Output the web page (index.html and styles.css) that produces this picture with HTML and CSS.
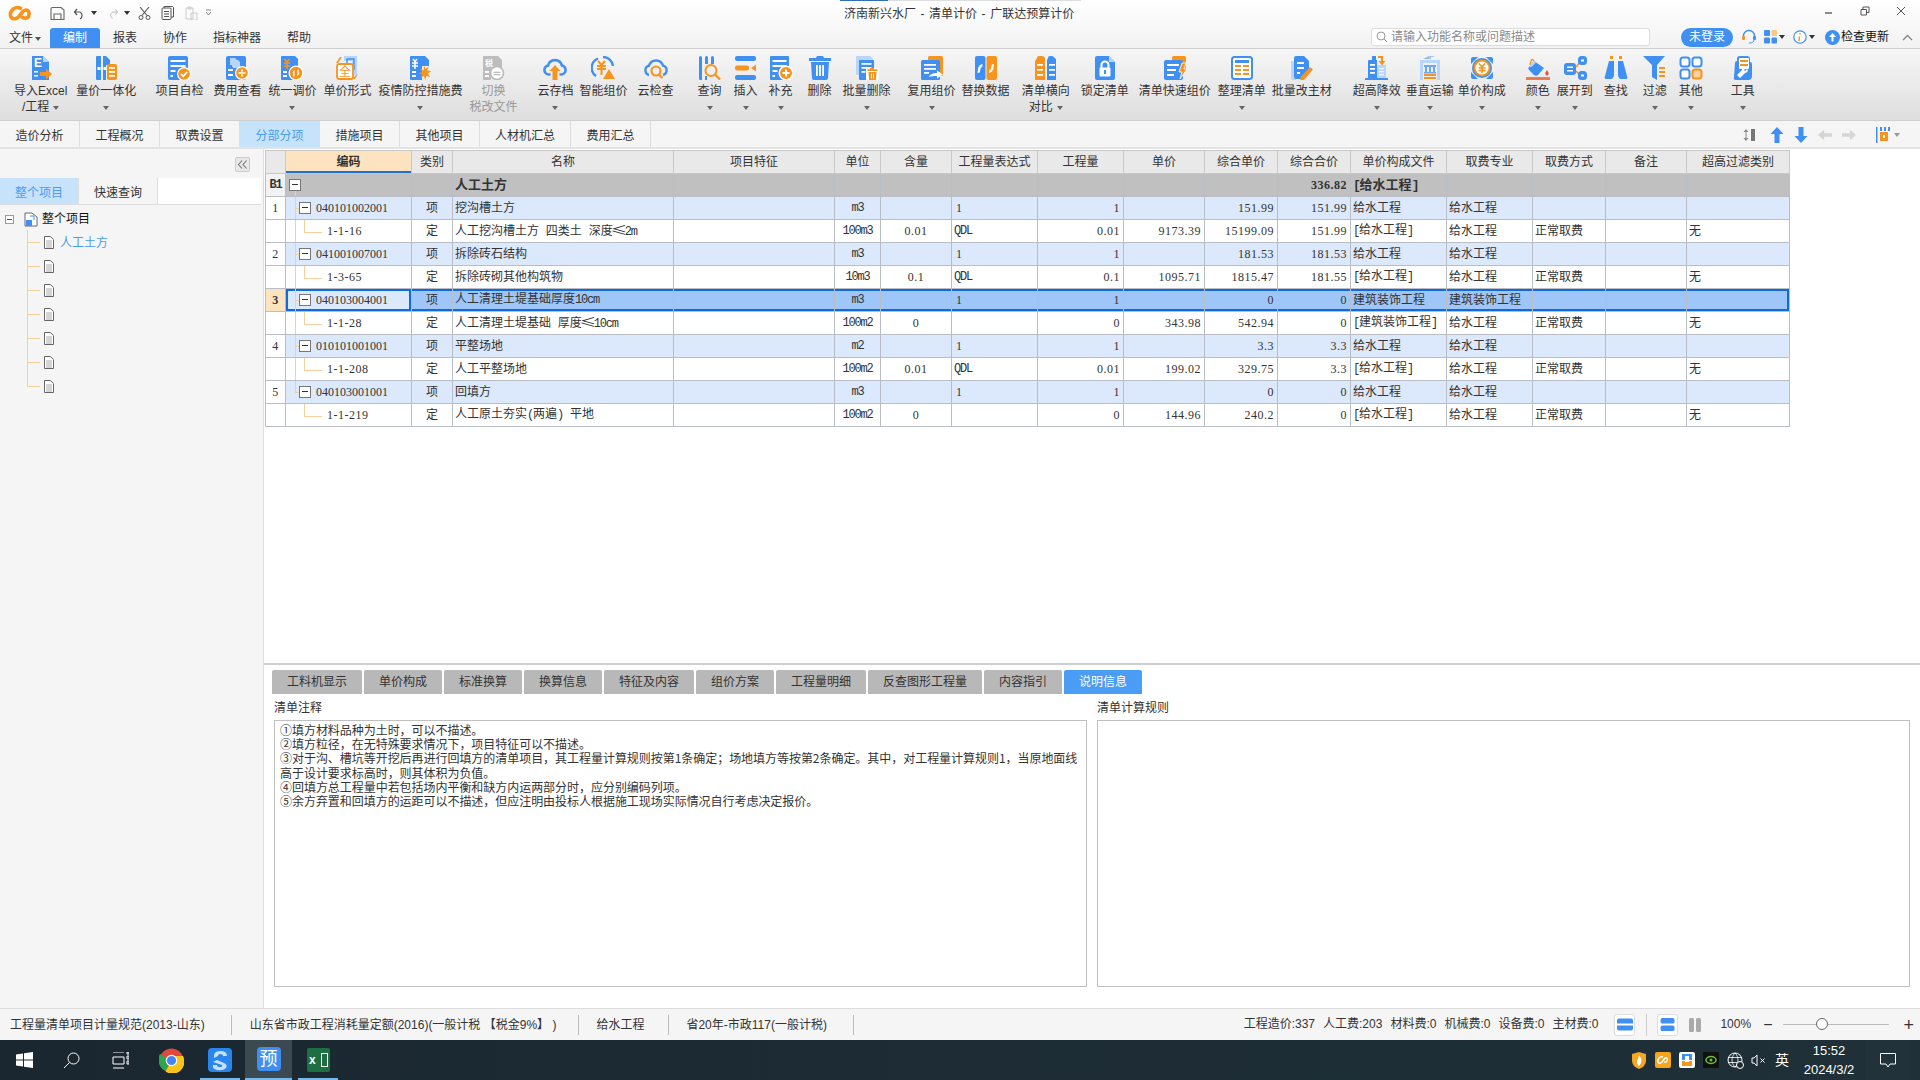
FILE: index.html
```html
<!DOCTYPE html>
<html lang="zh-CN">
<head>
<meta charset="utf-8">
<title>济南新兴水厂 - 清单计价 - 广联达预算计价</title>
<link rel="stylesheet" href="styles.css">
</head>
<body>
<svg class="defs" aria-hidden="true">
  <symbol id="i-doc" viewBox="0 0 10 13"><path d="M.5.5h6l3 3v9h-9z" fill="#fff" stroke="#666"/><path d="M2 5h6M2 7h6M2 9h6M2 11h6" stroke="#888" stroke-width=".7"/></symbol>
  <symbol id="i-excel" viewBox="0 0 24 24"><path class="b" d="M3 0h11l6 6v18H3z"/><path class="lb" d="M14 0l6 6h-6z"/><text class="gt" x="5" y="11" font-size="12" font-weight="700" fill="#fff">E</text><path class="w" d="M5 15h4v1.5H5zM5 19h4v1.5H5z"/><path class="o" d="M11 16h6v-3.500l6 5.500-6 5.500V20h-6z"/></symbol>
  <symbol id="i-liang" viewBox="0 0 24 24"><path class="b" d="M2 1q0-1 1-1h4v24H3q-1 0-1-1zM9 0h3l4 4v5h-4v15H9z"/><path class="w" d="M3.500 11h3v3h-3zM9.500 11h2.500v3H9.500z"/><rect class="o" x="13" y="8" width="10" height="16" rx="2"/><path class="w" d="M15 11h6v1.800h-6zM15 15h6v1.800h-6zM15 19h6v1.800h-6z"/></symbol>
  <symbol id="i-check" viewBox="0 0 24 24"><rect class="b" x="1" y="0" width="20" height="24" rx="2"/><path class="w" d="M3.500 4h15v2h-15zM3.500 9h15v2h-15zM3.500 14h5v2h-5zM3.500 19h2.500v2H3.500z"/><circle cx="17" cy="18" r="7" fill="#fff"/><circle class="o" cx="17" cy="18" r="5.800"/><path d="M14 18l2.300 2.300 3.800-4.300" fill="none" stroke="#fff" stroke-width="1.800"/></symbol>
  <symbol id="i-fee" viewBox="0 0 24 24"><rect class="b" x="1" y="0" width="20" height="24" rx="2"/><path class="lb" d="M5 2h5l2 2v7H7V9H5z"/><path class="lb" d="M8 4h5l2 2v6H8z"/><path class="w" d="M3 13h5v2H3zM3 18h5v2H3z"/><circle cx="17" cy="17" r="7" fill="#fff"/><circle class="o" cx="17" cy="17" r="5.800"/><path class="w" d="M13.500 16.300h7v1.400h-7zM16 13.500h2v2h-2zM16 18.500h2v2h-2z"/></symbol>
  <symbol id="i-tiao" viewBox="0 0 24 24"><path class="b" d="M1 1q0-1 1-1h13l3 3v21H2q-1 0-1-1z"/><path d="M4.500 3l2.500 3 2.500-3M3.800 7h6.400M3.800 10h6.400M7 6v7" fill="none" stroke="#f6941e" stroke-width="1.600"/><path class="w" d="M3 15h4v2H3zM3 19h4v2H3z"/><circle cx="16" cy="17" r="7.500" fill="#fff"/><circle class="o" cx="16" cy="17" r="6.200"/><path class="w" d="M12.500 17l2-3.500V20.500h-1.200v-3.500zM19.500 17l-2 3.500V13.500h1.200V17z"/></symbol>
  <symbol id="i-dan" viewBox="0 0 24 24"><path class="lb" d="M9 0h13v19h-5V5H9z"/><path d="M12 3h7v10h-7z" fill="none" stroke="#3f90f2" stroke-width="1.400"/><path class="o" d="M5 1h2L3 7H1zM20 20l3-2-3 5h-2z"/><rect x="2" y="8" width="16" height="15" rx="2" fill="#fff" stroke="#f6941e" stroke-width="1.800"/><text class="gt" x="4" y="20" font-size="12" fill="#f6941e">全</text></symbol>
  <symbol id="i-yi" viewBox="0 0 24 24"><path class="b" d="M2 1q0-1 1-1h14l4 4v6h-7v14H3q-1 0-1-1z"/><path d="M5 3l2 2.500L9 3M4 7h6M4 10h6M7 6v7" fill="none" stroke="#fff" stroke-width="1.500"/><path class="w" d="M4 15h4v2H4zM4 19h4v2H4z"/><path class="o" d="M16 9l1.300 4 3.500-2.500-1.500 4 4 .5-3.500 2.500 2.500 3.500-4-1-1 4-1.500-4-3.500 2 1.800-3.500-3.800-1 3.800-1.500-2-3.500 3.500 2z"/></symbol>
  <symbol id="i-qie" viewBox="0 0 24 24"><path class="g" d="M2 1q0-1 1-1h14l4 4v8H10v12H3q-1 0-1-1z"/><text class="gt" x="4" y="10" font-size="8" fill="#fff" font-weight="700">税</text><path class="w" d="M4 15h4v2H4zM4 19h4v2H4z"/><circle cx="16" cy="17" r="6.500" fill="#fff" stroke="#bbb" stroke-width="1.600"/><path class="g" d="M12.500 15.800h7v1.200h-7zM12.500 18h7v1.200h-7z"/></symbol>
  <symbol id="i-cup" viewBox="0 0 24 24"><path d="M6.500 18.500H6a4.500 4.500 0 0 1-1-8.900 7.200 7.200 0 0 1 14 0 4.500 4.500 0 0 1-1 8.900h-.5" fill="none" stroke="#3f90f2" stroke-width="2.600" stroke-linecap="round"/><path class="o" d="M12 9l5.500 6H14.500v9h-5v-9H6.500z"/></symbol>
  <symbol id="i-zhi" viewBox="0 0 24 24"><path d="M7 2.500a10 10 0 0 0-2 17.500M12 1a10 10 0 0 1 10 9" fill="none" stroke="#3f90f2" stroke-width="2.400"/><path d="M7 5l3.500 4L14 5M6 10h9M6 13h9M10.500 9v10" fill="none" stroke="#f6941e" stroke-width="2"/><path class="o" d="M18 13l6 10H12z"/></symbol>
  <symbol id="i-cck" viewBox="0 0 24 24"><path d="M5 19a4.800 4.800 0 0 1 0-9.300 7.300 7.300 0 0 1 14 0 4.800 4.800 0 0 1 0 9.300" fill="none" stroke="#3f90f2" stroke-width="2.400"/><circle cx="12" cy="15" r="4.500" fill="none" stroke="#f6941e" stroke-width="2.200"/><path d="M15 18.500l3.500 3.500" stroke="#f6941e" stroke-width="2.400"/></symbol>
  <symbol id="i-cha" viewBox="0 0 24 24"><path class="b" d="M1 1.500a1.500 1.500 0 0 1 3 0V24H2.500A1.500 1.500 0 0 1 1 22.500zM7 1.500a1.500 1.500 0 0 1 3 0V8H7zM13 1.500a1.500 1.500 0 0 1 3 0V8h-3z"/><path class="b" d="M7 20h2v4H7z"/><circle cx="13" cy="14.500" r="5.500" fill="none" stroke="#f6941e" stroke-width="2"/><path d="M17 18.500l5 5" stroke="#f6941e" stroke-width="2.400"/></symbol>
  <symbol id="i-cru" viewBox="0 0 24 24"><rect class="b" x="1" y="0" width="21" height="5" rx="2"/><rect class="o" x="1" y="9.500" width="14" height="5" rx="2"/><path class="o" d="M22 8.500v7l-5-3.500z"/><rect class="b" x="1" y="19" width="21" height="5" rx="2"/></symbol>
  <symbol id="i-bu" viewBox="0 0 24 24"><path class="b" d="M1 1q0-1 1-1h17q1 0 1 1v23H2q-1 0-1-1z"/><path class="w" d="M3.500 4h14v2h-14zM3.500 9h14v2h-14zM3.500 14h5v2h-5zM3.500 19h2.500v2H3.500z"/><circle cx="17" cy="17" r="7.500" fill="#fff"/><circle class="o" cx="17" cy="17" r="6"/><path class="w" d="M16 13.500h2v2.500h2.500v2H18v2.500h-2V18h-2.500v-2H16z"/></symbol>
  <symbol id="i-del" viewBox="0 0 24 24"><path class="b" d="M9 0h6l1 2h7v3H1V2h7zM3 6h18l-1 16q0 2-2 2H6q-2 0-2-2z"/><path class="w" d="M8 9h1.800v11H8zM11.100 9h1.800v11h-1.800zM14.200 9H16v11h-1.800z"/></symbol>
  <symbol id="i-bdel" viewBox="0 0 24 24"><path class="lb" d="M1 1q0-1 1-1h13l3 3v16H2q-1 0-1-1z"/><path class="b" d="M4 4h15v20H5q-1 0-1-1z"/><path class="w" d="M6.500 7h10v1.800h-10zM6.500 11h10v1.800h-10zM6.500 15h4v1.800h-4z"/><rect x="11" y="12" width="13" height="12" fill="#fff" rx="1"/><path class="o" d="M15 12h4v1.200h3.500v1.800h-10v-1.800H15zM13.500 16h8l-.6 8h-6.800z"/><path class="w" d="M16 17.500h.9v5H16zM18 17.500h.9v5H18z"/></symbol>
  <symbol id="i-reuse" viewBox="0 0 24 24"><rect class="o" x="8" y="0" width="15" height="20" rx="1.500"/><rect class="b" x="1" y="4" width="19" height="20" rx="1.500"/><path class="w" d="M4 8h12v1.800H4zM4 12h12v1.800H4zM4 16h5v1.800H4z"/><path class="w" d="M9 21c1-3 4-4 8-4v-2.500l6 4-6 4V20c-3 0-6 0-8 1z"/></symbol>
  <symbol id="i-rep" viewBox="0 0 24 24"><rect class="b" x="1" y="0" width="10.500" height="24" rx="2"/><rect class="o" x="12.500" y="0" width="10.500" height="24" rx="2"/><path class="w" d="M3.500 17l.8-6 2-1-1.500-.5 3.700-1.500-.5 4-1-1.400-1.300 6z"/><path class="w" d="M20 8l-.8 6-2 1 1.500.5-3.700 1.500.5-4 1 1.400 1.300-6z"/></symbol>
  <symbol id="i-heng" viewBox="0 0 24 24"><path class="o" d="M3 2q0-2 2-2h3q2 0 3 2v22H1V5z"/><path class="w" d="M3 8h6v1.800H3zM3 13h6v1.800H3zM3 18h6v1.800H3z"/><path class="b" d="M14 2q0-2 2-2h2q1 0 4 3v21h-9V4z"/><path class="w" d="M15 8h6v1.800h-6zM15 13h6v1.800h-6zM15 18h6v1.800h-6z"/></symbol>
  <symbol id="i-lock" viewBox="0 0 24 24"><path class="b" d="M2 2q0-2 2-2h12l6 6v16q0 2-2 2H4q-2 0-2-2z"/><path class="lb" d="M16 0l6 6h-6z"/><path d="M8.500 12V9a3.500 3.500 0 0 1 7 0v3" fill="none" stroke="#fff" stroke-width="2"/><rect class="w" x="6.500" y="11.500" width="11" height="9" rx="1"/><rect class="b" x="11" y="14" width="2" height="4"/></symbol>
  <symbol id="i-kuai" viewBox="0 0 24 24"><rect class="o" x="9" y="0" width="14" height="16" rx="1.500"/><rect class="b" x="1" y="4" width="19" height="20" rx="2"/><path class="w" d="M4 8h12v2H4zM4 13h9v2H4zM4 18h7v2H4z"/><path class="o" d="M19 7h4l-2 6h3l-7 10 2-7h-3z" stroke="#fff" stroke-width=".8"/></symbol>
  <symbol id="i-zheng" viewBox="0 0 24 24"><rect x="2" y="1" width="20" height="22" rx="2.500" fill="#fff" stroke="#3f90f2" stroke-width="2"/><path class="b" d="M5 4h14v3H5z"/><path class="o" d="M5 9h6v2H5zM13 9h6v2h-6zM5 13h6v2H5zM13 13h6v2h-6zM5 17h6v2H5zM13 17h6v2h-6z"/></symbol>
  <symbol id="i-gai" viewBox="0 0 24 24"><path class="lb" d="M1 5h5v19H3q-2 0-2-2z"/><path class="b" d="M4 2q0-2 2-2h8l5 5v9l-7 9H6q-2 0-2-2z"/><path class="w" d="M7 6h7v2H7zM7 11h7v2H7zM7 16h3v2H7z"/><path class="o" d="M20 11l3 2.500-9 10.500-4 .5 1-4z"/></symbol>
  <symbol id="i-chao" viewBox="0 0 24 24"><path class="b" d="M3 22V5q0-1 1-1h3V0h4v4h1v18z"/><path class="lb" d="M12 9h9v13h-9z"/><path class="w" d="M5 8h5v1.800H5zM5 12h5v1.800H5zM5 16h5v1.800H5z"/><path class="w" d="M14 12h5v1.200h-5zM14 15h5v1.200h-5zM14 18h5v1.200h-5z" opacity=".8"/><rect class="b" x="0" y="22" width="23" height="2"/><path d="M13 1h4v5" fill="none" stroke="#f6941e" stroke-width="2"/><path class="o" d="M13.500 5h7L17 9.500z"/></symbol>
  <symbol id="i-chui" viewBox="0 0 24 24"><path d="M12 3V0h4" fill="none" stroke="#8fbdf5" stroke-width="1.500"/><path class="lb" d="M2 4h20v3H2zM2 7h3v17H2zM19 7h3v17h-3z"/><path fill="#9db7d6" d="M5 3l6-3v3z"/><path class="b" d="M6 9h12v2H6zM7 11h2v5H7zM11 11h2v5h-2zM15 11h2v5h-2zM6 16h12v1.500H6z" opacity=".75"/><path class="o" d="M6 18h12v2H6zM6 21h12v2H6z"/></symbol>
  <symbol id="i-gou" viewBox="0 0 24 24"><path class="b" d="M1 3q0-2 2-2h5l-7 7zM23 3q0-2-2-2h-5l7 7zM1 21q0 2 2 2h5l-7-7zM23 21q0 2-2 2h-5l7-7z"/><circle cx="12" cy="12" r="10" fill="#3f90f2"/><circle cx="12" cy="12" r="8.500" fill="#f6941e"/><circle class="w" cx="12" cy="12" r="6.500"/><path d="M9 7.500l3 3.500 3-3.500M8.500 12h7M8.500 14.500h7M12 11v6" fill="none" stroke="#f6941e" stroke-width="1.600"/></symbol>
  <symbol id="i-color" viewBox="0 0 24 24"><path class="b" d="M8 5l10 7-6 7q-2 1.500-4 0L3 14q-1.500-2 0-3z"/><path d="M8 5q-2-3-3 0L4 9" fill="none" stroke="#f6941e" stroke-width="1.300"/><path class="lb" d="M3.500 10L8 5l2 1.500-5 5z"/><path fill="#e4523b" d="M21 14q2 3 1.500 4a1.500 1.500 0 0 1-3 0q-.5-1 1.500-4z"/><rect x="0" y="21" width="24" height="3" rx=".5" fill="#ee7a4f"/></symbol>
  <symbol id="i-exp" viewBox="0 0 24 24"><rect class="b" x="1" y="7" width="12" height="12" rx="3"/><path class="w" d="M4 10.500h6v1.500H4zM4 14h6v1.500H4z"/><path d="M13 11l5-6M13 15l5 5" stroke="#f6941e" stroke-width="1.500"/><rect class="b" x="15" y="0" width="9" height="9" rx="3.500"/><rect class="b" x="15" y="15" width="9" height="9" rx="3.500"/><rect class="w" x="18" y="3.500" width="3" height="2"/><rect class="w" x="18" y="18.500" width="3" height="2"/></symbol>
  <symbol id="i-find" viewBox="0 0 24 24"><path class="b" d="M5 5h5v15l-2 3H2q-2 0-1-3zM14 5h5l4 15q1 3-1 3h-6l-2-3z"/><path class="o" d="M6 0h3v3H6zM15 0h3v3h-3z"/></symbol>
  <symbol id="i-filter" viewBox="0 0 24 24"><path class="b" d="M0 0h22l-8 9v15l-5-3V9z"/><path class="o" d="M16 11h6v2h-6zM16 15h6v2h-6zM16 19h6v2h-6z"/></symbol>
  <symbol id="i-oth" viewBox="0 0 24 24"><g fill="#fff" stroke="#3f90f2" stroke-width="2"><rect x="1.500" y="1.500" width="9" height="9" rx="2.500"/><rect x="13.500" y="1.500" width="9" height="9" rx="2.500"/><rect x="1.500" y="13.500" width="9" height="9" rx="2.500"/></g><rect x="13.500" y="13.500" width="9" height="9" rx="2.500" fill="#fad19a" stroke="#f6941e" stroke-width="2"/></symbol>
  <symbol id="i-tool" viewBox="0 0 24 24"><path class="b" d="M4 7q0-2 2-2V3q0-3 3-3h7q3 0 3 3v3q2 0 2 2v12q0 4-4 4H5q-3 0-2-3z"/><rect class="w" x="8" y="2" width="10" height="11" rx="1"/><path class="o" d="M9 4h8v2H9zM9 8h8v2H9z"/><path class="w" d="M6 19l5-5c0-3 3-4 4-2l-2 2 1 1 2-2c2 1 0 4-2 4l-5 5z"/></symbol>
</svg>

<header class="top">
  <div class="titlebar">
    <svg class="logo" viewBox="0 0 24 17"><path d="M13 3C8 .5 2 5 2.500 10c.5 4.500 5 5 8 2.500L16 6c3-2.500 6.500-.5 6 3.500s-4 4.500-7 3" fill="none" stroke="#f6941e" stroke-width="3.800" stroke-linecap="round"/></svg>
    <svg class="qa qa-save" viewBox="0 0 15 13"><path d="M1 2q0-1.500 1.500-1.500H11L14 3v9.500H1zM4 12.500V7h7v5.500" fill="none" stroke="#666" stroke-width="1.100"/></svg>
    <svg class="qa qa-undo" viewBox="0 0 13 13"><path d="M4 2L1.500 5 4 8M2 5h5a4 4 0 0 1 0 7" fill="none" stroke="#555" stroke-width="1.200"/></svg>
    <i class="caret caret-dark"></i>
    <svg class="qa qa-redo" viewBox="0 0 13 13"><path d="M9 2l2.500 3L9 8M11 5H6a4 4 0 0 0 0 7" fill="none" stroke="#ccc" stroke-width="1.200"/></svg>
    <i class="caret caret-dark"></i>
    <svg class="qa qa-cut" viewBox="0 0 13 13"><path d="M2 0l7 8.500M11 0L4 8.500" stroke="#555" stroke-width="1.100"/><circle cx="3" cy="10.500" r="2" fill="none" stroke="#555"/><circle cx="10" cy="10.500" r="2" fill="none" stroke="#555"/></svg>
    <svg class="qa qa-copy" viewBox="0 0 13 14"><rect x="1" y="2" width="9" height="11.500" rx="1" fill="none" stroke="#555"/><path d="M3 2V.5h8.500l1 1V11H10M3 5.500h5M3 8h5M3 10.500h5" fill="none" stroke="#555"/></svg>
    <svg class="qa qa-paste" viewBox="0 0 14 14"><path d="M2 2h7v11H2zM4 1h3v2H4zM7 7h6v7H7z" fill="none" stroke="#ccc"/></svg>
    <svg class="qa qa-more" viewBox="0 0 7 8"><path d="M1 1h5M1 3l2.500 3L6 3" fill="none" stroke="#888"/></svg>
    <div class="apptitle">济南新兴水厂 - 清单计价 - 广联达预算计价</div>
    <div class="progress"></div>
    <div class="winctl">
      <svg class="wc" viewBox="0 0 10 10"><path d="M1 7h7" stroke="#666" stroke-width="1.500"/></svg>
      <svg class="wc" viewBox="0 0 10 10"><path d="M1 3.500h5.500V9H1zM3 3.500V1h6v5.500H6.500" fill="none" stroke="#555"/></svg>
      <svg class="wc" viewBox="0 0 10 10"><path d="M1 1l8 8M9 1L1 9" stroke="#555"/></svg>
    </div>
  </div>
  <nav class="menubar">
    <span class="mi mi-file">文件<i class="caret caret-s"></i></span>
    <span class="mi mi-on">编制</span>
    <span class="mi">报表</span>
    <span class="mi">协作</span>
    <span class="mi">指标神器</span>
    <span class="mi">帮助</span>
    <div class="menuright">
      <div class="search">
        <svg class="s-ic" viewBox="0 0 12 12"><circle cx="5" cy="5" r="4" fill="none" stroke="#999"/><path d="M8 8l3 3" stroke="#999"/></svg>
        <span>请输入功能名称或问题描述</span>
      </div>
      <span class="pill">未登录</span>
      <svg class="mr-ic head" viewBox="0 0 16 16"><path d="M2.500 9V7a5.500 5.500 0 0 1 11 0" fill="none" stroke="#3f90f2" stroke-width="1.400"/><rect x="1" y="7" width="3" height="4" rx="1" fill="#f6941e"/><rect x="12" y="7" width="3" height="4" rx="1" fill="#3f90f2"/><path d="M13 11q0 3-5 3" fill="none" stroke="#3f90f2"/></svg>
      <svg class="mr-ic gridi" viewBox="0 0 13 14"><rect x="0" y="0" width="6" height="6" rx="1" fill="#3f90f2"/><rect x="7.500" y="0" width="5.500" height="6" rx="1" fill="#f9c98a"/><rect x="0" y="7.500" width="6" height="6" rx="1" fill="#3f90f2"/><rect x="7.500" y="7.500" width="5.500" height="6" rx="1" fill="#3f90f2"/></svg>
      <i class="caret caret-dark caret-m"></i>
      <svg class="mr-ic info" viewBox="0 0 14 14"><circle cx="7" cy="7" r="6.200" fill="#fff" stroke="#3f90f2" stroke-width="1.200"/><path d="M7 3v1.500M6.500 6.500L6 11" stroke="#f6941e" stroke-width="1.500"/></svg>
      <i class="caret caret-dark caret-m"></i>
      <svg class="mr-ic upc" viewBox="0 0 15 15"><circle cx="7.500" cy="7.500" r="7.500" fill="#3f90f2"/><path d="M7.500 3l3.500 4H8.500v4.500h-2V7H4z" fill="#fff"/></svg>
      <span class="upd">检查更新</span>
      <svg class="chev" viewBox="0 0 11 7"><path d="M1 6l4.500-4.500L10 6" fill="none" stroke="#888" stroke-width="1.400"/></svg>
    </div>
  </nav>
</header>

<section class="ribbon">
  <div class="rb"><svg class="ic"><use href="#i-excel"/></svg><span>导入Excel</span><span class="l2">/工程<i class="caret"></i></span></div>
  <div class="rb g9"><svg class="ic"><use href="#i-liang"/></svg><span>量价一体化</span><span class="l2"><i class="caret"></i></span></div>
  <div class="rb g19"><svg class="ic"><use href="#i-check"/></svg><span>项目自检</span></div>
  <div class="rb g10"><svg class="ic"><use href="#i-fee"/></svg><span>费用查看</span></div>
  <div class="rb g7"><svg class="ic"><use href="#i-tiao"/></svg><span>统一调价</span><span class="l2"><i class="caret"></i></span></div>
  <div class="rb g7"><svg class="ic"><use href="#i-dan"/></svg><span>单价形式</span></div>
  <div class="rb g7"><svg class="ic"><use href="#i-yi"/></svg><span>疫情防控措施费</span><span class="l2"><i class="caret"></i></span></div>
  <div class="rb g7 off"><svg class="ic"><use href="#i-qie"/></svg><span>切换</span><span class="l2">税改文件</span></div>
  <div class="rb g20"><svg class="ic"><use href="#i-cup"/></svg><span>云存档</span><span class="l2"><i class="caret"></i></span></div>
  <div class="rb g6"><svg class="ic"><use href="#i-zhi"/></svg><span>智能组价</span></div>
  <div class="rb g10"><svg class="ic"><use href="#i-cck"/></svg><span>云检查</span></div>
  <div class="rb g24"><svg class="ic"><use href="#i-cha"/></svg><span>查询</span><span class="l2"><i class="caret"></i></span></div>
  <div class="rb g12"><svg class="ic"><use href="#i-cru"/></svg><span>插入</span><span class="l2"><i class="caret"></i></span></div>
  <div class="rb g11"><svg class="ic"><use href="#i-bu"/></svg><span>补充</span><span class="l2"><i class="caret"></i></span></div>
  <div class="rb g15"><svg class="ic"><use href="#i-del"/></svg><span>删除</span></div>
  <div class="rb g11"><svg class="ic"><use href="#i-bdel"/></svg><span>批量删除</span><span class="l2"><i class="caret"></i></span></div>
  <div class="rb g17"><svg class="ic"><use href="#i-reuse"/></svg><span>复用组价</span><span class="l2"><i class="caret"></i></span></div>
  <div class="rb g6"><svg class="ic"><use href="#i-rep"/></svg><span>替换数据</span></div>
  <div class="rb g12"><svg class="ic"><use href="#i-heng"/></svg><span>清单横向</span><span class="l2">对比<i class="caret"></i></span></div>
  <div class="rb g11"><svg class="ic"><use href="#i-lock"/></svg><span>锁定清单</span></div>
  <div class="rb g10"><svg class="ic"><use href="#i-kuai"/></svg><span>清单快速组价</span></div>
  <div class="rb g7"><svg class="ic"><use href="#i-zheng"/></svg><span>整理清单</span><span class="l2"><i class="caret"></i></span></div>
  <div class="rb g6"><svg class="ic"><use href="#i-gai"/></svg><span>批量改主材</span></div>
  <div class="rb g21"><svg class="ic"><use href="#i-chao"/></svg><span>超高降效</span><span class="l2"><i class="caret"></i></span></div>
  <div class="rb g5"><svg class="ic"><use href="#i-chui"/></svg><span>垂直运输</span><span class="l2"><i class="caret"></i></span></div>
  <div class="rb g4"><svg class="ic"><use href="#i-gou"/></svg><span>单价构成</span><span class="l2"><i class="caret"></i></span></div>
  <div class="rb g20"><svg class="ic"><use href="#i-color"/></svg><span>颜色</span><span class="l2"><i class="caret"></i></span></div>
  <div class="rb g7"><svg class="ic"><use href="#i-exp"/></svg><span>展开到</span><span class="l2"><i class="caret"></i></span></div>
  <div class="rb g11"><svg class="ic"><use href="#i-find"/></svg><span>查找</span></div>
  <div class="rb g15"><svg class="ic"><use href="#i-filter"/></svg><span>过滤</span><span class="l2"><i class="caret"></i></span></div>
  <div class="rb g12"><svg class="ic"><use href="#i-oth"/></svg><span>其他</span><span class="l2"><i class="caret"></i></span></div>
  <div class="rb g28"><svg class="ic"><use href="#i-tool"/></svg><span>工具</span><span class="l2"><i class="caret"></i></span></div>
</section>

<div class="tabbar">
  <span class="tab">造价分析</span><span class="tab">工程概况</span><span class="tab">取费设置</span><span class="tab tab-on">分部分项</span><span class="tab">措施项目</span><span class="tab">其他项目</span><span class="tab tab-w">人材机汇总</span><span class="tab">费用汇总</span>
  <div class="tb-tools">
    <svg class="tt tt-sort" viewBox="0 0 14 14"><path d="M3 1l2.500 3h-5zM3 13L.5 10h5z" fill="#888"/><path d="M2.500 4h1v6h-1z" fill="#888"/><path d="M8 1h4v12H8z" fill="#777"/></svg>
    <svg class="tt" viewBox="0 0 14 16"><path d="M7 0l6.500 7H9.500v9h-5V7H.5z" fill="#3f90f2"/></svg>
    <svg class="tt" viewBox="0 0 14 16"><path d="M7 16L.5 9h4V0h5v9h4z" fill="#3f90f2"/></svg>
    <svg class="tt" viewBox="0 0 16 14"><path d="M0 7l7-6v4h9v4H7v4z" fill="#d5d5d5"/></svg>
    <svg class="tt" viewBox="0 0 16 14"><path d="M16 7L9 1v4H0v4h9v4z" fill="#d5d5d5"/></svg>
    <svg class="tt tt-set" viewBox="0 0 14 16"><path d="M0 0h1.500v16H0zM4 0h2v4H4zM8 0h2v4H8zM12 0h2v4h-2z" fill="#3f90f2"/><rect x="4" y="5" width="8" height="9" fill="#f6941e"/><path d="M7 8h2v3H7z" fill="#fff"/></svg>
    <i class="caret caret-g"></i>
  </div>
</div>
<div class="strip"></div>

<main class="main">
  <aside class="side">
    <div class="side-head"><span class="collapse"><svg viewBox="0 0 13 13" class="col-ic"><path d="M6 2.500L2.500 6.500 6 10.500M10.500 2.500L7 6.500l3.500 4" fill="none" stroke="#777" stroke-width="1.100"/></svg></span></div>
    <div class="side-tabs"><span class="st st-on">整个项目</span><span class="st">快速查询</span></div>
    <div class="tree">
      <div class="tr-root">
        <span class="tbox"></span>
        <svg class="tr-ic" viewBox="0 0 14 15"><path d="M1 1h7l5 4v9H1z" fill="#fff" stroke="#667" stroke-width="1"/><rect x="2" y="8" width="6" height="6" fill="#3f90f2"/><path d="M6 4h4v4" stroke="#3f90f2" fill="none"/></svg>
        <span class="rootlabel">整个项目</span>
      </div>
      <div class="tr-kids">
        <div class="tr-kid"><svg class="doc"><use href="#i-doc"/></svg><span class="kid-on">人工土方</span></div>
        <div class="tr-kid"><svg class="doc"><use href="#i-doc"/></svg></div>
        <div class="tr-kid"><svg class="doc"><use href="#i-doc"/></svg></div>
        <div class="tr-kid"><svg class="doc"><use href="#i-doc"/></svg></div>
        <div class="tr-kid"><svg class="doc"><use href="#i-doc"/></svg></div>
        <div class="tr-kid"><svg class="doc"><use href="#i-doc"/></svg></div>
        <div class="tr-kid kid-last"><svg class="doc"><use href="#i-doc"/></svg></div>
      </div>
    </div>
  </aside>

  <div class="work">
    <div class="gridpane">
      <table class="grid">
        <colgroup>
          <col class="c20"><col class="c126"><col class="c41"><col class="c221"><col class="c161"><col class="c46"><col class="c71"><col class="c86"><col class="c86"><col class="c81"><col class="c73"><col class="c73"><col class="c96"><col class="c86"><col class="c73"><col class="c81"><col class="c103">
        </colgroup>
        <thead>
          <tr>
            <th></th><th class="th-on">编码</th><th>类别</th><th>名称</th><th>项目特征</th><th>单位</th><th>含量</th><th>工程量表达式</th><th>工程量</th><th>单价</th><th>综合单价</th><th>综合合价</th><th>单价构成文件</th><th>取费专业</th><th>取费方式</th><th>备注</th><th>超高过滤类别</th>
          </tr>
        </thead>
        <tbody>
          <tr class="r-b">
            <td class="rh m"><b>B1</b></td><td class="code"><span class="box box-b"></span></td><td></td><td class="name"><b>人工土方</b></td><td></td><td></td><td></td><td></td><td></td><td></td><td></td><td class="num d"><b>336.82</b></td><td class="tx"><b><span class="m">[</span>给水工程<span class="m">]</span></b></td><td></td><td></td><td></td><td></td>
          </tr>
          <tr class="r-q">
            <td class="rh d">1</td><td class="code"><span class="box"></span><span class="codet">040101002001</span></td><td class="ctr">项</td><td class="name">挖沟槽土方</td><td></td><td class="ctr m">m3</td><td></td><td class="ex d">1</td><td class="num d">1</td><td></td><td class="num d">151.99</td><td class="num d">151.99</td><td class="tx">给水工程</td><td class="tx">给水工程</td><td></td><td></td><td></td>
          </tr>
          <tr class="r-d">
            <td class="rh"></td><td class="code kid"><span class="d">1-1-16</span></td><td class="ctr">定</td><td class="name">人工挖沟槽土方 四类土 深度<span class="le">≤</span><span class="m">2m</span></td><td></td><td class="ctr m">100m3</td><td class="ctr d">0.01</td><td class="ex ex-q m">QDL</td><td class="num d">0.01</td><td class="num d">9173.39</td><td class="num d">15199.09</td><td class="num d">151.99</td><td class="tx"><span class="m">[</span>给水工程<span class="m">]</span></td><td class="tx">给水工程</td><td class="tx">正常取费</td><td></td><td class="tx">无</td>
          </tr>
          <tr class="r-q">
            <td class="rh d">2</td><td class="code"><span class="box"></span><span class="codet">041001007001</span></td><td class="ctr">项</td><td class="name">拆除砖石结构</td><td></td><td class="ctr m">m3</td><td></td><td class="ex d">1</td><td class="num d">1</td><td></td><td class="num d">181.53</td><td class="num d">181.53</td><td class="tx">给水工程</td><td class="tx">给水工程</td><td></td><td></td><td></td>
          </tr>
          <tr class="r-d">
            <td class="rh"></td><td class="code kid"><span class="d">1-3-65</span></td><td class="ctr">定</td><td class="name">拆除砖砌其他构筑物</td><td></td><td class="ctr m">10m3</td><td class="ctr d">0.1</td><td class="ex ex-q m">QDL</td><td class="num d">0.1</td><td class="num d">1095.71</td><td class="num d">1815.47</td><td class="num d">181.55</td><td class="tx"><span class="m">[</span>给水工程<span class="m">]</span></td><td class="tx">给水工程</td><td class="tx">正常取费</td><td></td><td class="tx">无</td>
          </tr>
          <tr class="r-s">
            <td class="rh rh-s d"><b>3</b></td><td class="code code-s"><span class="box"></span><span class="codet">040103004001</span></td><td class="ctr">项</td><td class="name">人工清理土堤基础厚度<span class="m">10cm</span></td><td></td><td class="ctr m">m3</td><td></td><td class="ex d">1</td><td class="num d">1</td><td></td><td class="num d">0</td><td class="num d">0</td><td class="tx">建筑装饰工程</td><td class="tx">建筑装饰工程</td><td></td><td></td><td class="end-s"></td>
          </tr>
          <tr class="r-d">
            <td class="rh"></td><td class="code kid"><span class="d">1-1-28</span></td><td class="ctr">定</td><td class="name">人工清理土堤基础 厚度<span class="le">≤</span><span class="m">10cm</span></td><td></td><td class="ctr m">100m2</td><td class="ctr d">0</td><td></td><td class="num d">0</td><td class="num d">343.98</td><td class="num d">542.94</td><td class="num d">0</td><td class="tx"><span class="m">[</span>建筑装饰工程<span class="m">]</span></td><td class="tx">给水工程</td><td class="tx">正常取费</td><td></td><td class="tx">无</td>
          </tr>
          <tr class="r-q">
            <td class="rh d">4</td><td class="code"><span class="box"></span><span class="codet">010101001001</span></td><td class="ctr">项</td><td class="name">平整场地</td><td></td><td class="ctr m">m2</td><td></td><td class="ex d">1</td><td class="num d">1</td><td></td><td class="num d">3.3</td><td class="num d">3.3</td><td class="tx">给水工程</td><td class="tx">给水工程</td><td></td><td></td><td></td>
          </tr>
          <tr class="r-d">
            <td class="rh"></td><td class="code kid"><span class="d">1-1-208</span></td><td class="ctr">定</td><td class="name">人工平整场地</td><td></td><td class="ctr m">100m2</td><td class="ctr d">0.01</td><td class="ex ex-q m">QDL</td><td class="num d">0.01</td><td class="num d">199.02</td><td class="num d">329.75</td><td class="num d">3.3</td><td class="tx"><span class="m">[</span>给水工程<span class="m">]</span></td><td class="tx">给水工程</td><td class="tx">正常取费</td><td></td><td class="tx">无</td>
          </tr>
          <tr class="r-q r-lastq">
            <td class="rh d">5</td><td class="code"><span class="box"></span><span class="codet">040103001001</span></td><td class="ctr">项</td><td class="name">回填方</td><td></td><td class="ctr m">m3</td><td></td><td class="ex d">1</td><td class="num d">1</td><td></td><td class="num d">0</td><td class="num d">0</td><td class="tx">给水工程</td><td class="tx">给水工程</td><td></td><td></td><td></td>
          </tr>
          <tr class="r-d r-last">
            <td class="rh"></td><td class="code kid"><span class="d">1-1-219</span></td><td class="ctr">定</td><td class="name">人工原土夯实<span class="m">(</span>两遍<span class="m">)</span> 平地</td><td></td><td class="ctr m">100m2</td><td class="ctr d">0</td><td></td><td class="num d">0</td><td class="num d">144.96</td><td class="num d">240.2</td><td class="num d">0</td><td class="tx"><span class="m">[</span>给水工程<span class="m">]</span></td><td class="tx">给水工程</td><td class="tx">正常取费</td><td></td><td class="tx">无</td>
          </tr>
        </tbody>
      </table>
    </div>

    <div class="lower">
      <div class="ltabs">
        <span class="lt t90">工料机显示</span><span class="lt t78">单价构成</span><span class="lt t78">标准换算</span><span class="lt t78">换算信息</span><span class="lt t90">特征及内容</span><span class="lt t78">组价方案</span><span class="lt t90">工程量明细</span><span class="lt t114">反查图形工程量</span><span class="lt t78">内容指引</span><span class="lt t78 lt-on">说明信息</span>
      </div>
      <div class="notes">
        <div class="note">
          <div class="nlabel">清单注释</div>
          <div class="nbox">①填方材料品种为土时，可以不描述。<br>②填方粒径，在无特殊要求情况下，项目特征可以不描述。<br>③对于沟、槽坑等开挖后再进行回填方的清单项目，其工程量计算规则按第1条确定；场地填方等按第2条确定。其中，对工程量计算规则1，当原地面线<br>高于设计要求标高时，则其体积为负值。<br>④回填方总工程量中若包括场内平衡和缺方内运两部分时，应分别编码列项。<br>⑤余方弃置和回填方的运距可以不描述，但应注明由投标人根据施工现场实际情况自行考虑决定报价。</div>
        </div>
        <div class="note note-r">
          <div class="nlabel">清单计算规则</div>
          <div class="nbox"></div>
        </div>
      </div>
    </div>
  </div>
</main>

<footer class="status">
  <span class="sp sp-a">工程量清单项目计量规范(2013-山东)</span>
  <span class="sp sp-b">山东省市政工程消耗量定额(2016)(一般计税 【税金9%】 )</span>
  <span class="sp sp-c">给水工程</span>
  <span class="sp">省20年-市政117(一般计税)</span>
  <div class="sright">
    <span>工程造价:337</span><span>人工费:203</span><span>材料费:0</span><span>机械费:0</span><span>设备费:0</span><span>主材费:0</span>
    <span class="vbtn"><svg viewBox="0 0 16 12" class="v-ic"><path d="M0 2q0-2 2-2h12q2 0 2 2v3H0zM0 7h16v3q0 2-2 2H2q-2 0-2-2z" fill="#3f90f2"/></svg></span>
    <i class="vsep"></i>
    <span class="vbtn vbtn2"><svg viewBox="0 0 16 14" class="v-ic"><rect width="15" height="6" y="0" rx="2" fill="#3f90f2"/><rect width="15" height="6" y="8" rx="2" fill="#3f90f2"/></svg></span>
    <svg viewBox="0 0 12 14" class="v2"><rect width="5" height="14" rx="1.500" fill="#aaa"/><rect x="7" width="5" height="14" rx="1.500" fill="#aaa"/></svg>
    <span class="zoom">100%</span>
    <span class="zm">−</span>
    <span class="slider"><i class="knob"></i></span>
    <span class="zp">+</span>
  </div>
</footer>

<div class="taskbar">
  <svg class="tk t-win" viewBox="0 0 17 16"><path d="M0 2.500l7-1v6H0zM8 1.300L17 0v7.500H8zM0 8.500h7v6l-7-1zM8 8.500h9V16l-9-1.300z" fill="#fff"/></svg>
  <svg class="tk t-search" viewBox="0 0 17 17"><circle cx="10.500" cy="6.500" r="5.500" fill="none" stroke="#fff"/><path d="M6.500 10.500L1 16" stroke="#fff"/></svg>
  <svg class="tk t-view" viewBox="0 0 17 17"><path d="M1 0h11M1 5h11v7H1zM1 16h11M15 0h2v2h-2zM15 4h2v3h-2zM15 9h2v3h-2z" fill="none" stroke="#fff"/></svg>
  <svg class="tk t-chrome" viewBox="0 0 25 25"><circle cx="12.500" cy="12.500" r="12" fill="#e2483b"/><path d="M12.500 12.500L1 6a12 12 0 0 0 5.500 17z" fill="#2fa44f"/><path d="M12.500 12.500l-6 11A12 12 0 0 0 24 8h-11z" fill="#f9c31b"/><circle cx="12.500" cy="12.500" r="5.800" fill="#fff"/><circle cx="12.500" cy="12.500" r="4.600" fill="#4285f4"/></svg>
  <svg class="tk t-app" viewBox="0 0 24 24"><rect width="24" height="24" rx="4" fill="#2a86ec"/><path d="M12 3q7 0 7 5h-4q0-2-3-2-2 0-2 2l-4 2q-1-7 6-7zM5 14l4-2 7 3q4 2 2 5-3 3-9 2-5-1-4-5h4q0 2 3 2 3 0 2-2z" fill="#c7e0fc"/></svg>
  <span class="t-active"><span class="t-yu">预</span></span>
  <span class="t-xl"><span class="xl-a">x</span><span class="xl-b"></span></span>
  <i class="ind ind1"></i><i class="ind ind3"></i>
  <div class="tray">
    <svg class="tk2" viewBox="0 0 14 17"><path d="M7 0l7 2v7q0 5-7 8-7-3-7-8V2z" fill="#f6a623"/><path d="M7 3c2 3 3 4 2 8-.5 1.500-1.500 2-2 3-2-2-3-4-1-7z" fill="#fff"/></svg>
    <svg class="tk3" viewBox="0 0 16 16"><rect width="16" height="16" rx="2" fill="#f6a51c"/><path d="M8 5C5 4 2 7 3 10c1 2 3 1 4 0l3-4c2-1 3 1 2 3s-2 1-3 1" fill="none" stroke="#fff" stroke-width="1.500"/></svg>
    <svg class="tk3" viewBox="0 0 16 16"><rect width="16" height="16" rx="2" fill="#fff"/><path d="M3 2h10v6H3z" fill="#3f90f2"/><path d="M3 9h10v5H3z" fill="#f6941e"/><path d="M6 4h4v6H6z" fill="#fff"/></svg>
    <svg class="tk3" viewBox="0 0 16 16"><rect width="16" height="16" fill="#111"/><ellipse cx="8" cy="8" rx="5" ry="3.500" fill="none" stroke="#6fbf3a" stroke-width="1.500"/><circle cx="8" cy="8" r="1.500" fill="#6fbf3a"/></svg>
    <svg class="tk4" viewBox="0 0 17 17"><circle cx="8" cy="8" r="7" fill="none" stroke="#fff"/><path d="M1 5.500h14M1 10.500h14M8 1c-4 4-4 10 0 14M8 1c4 4 4 10 0 14" fill="none" stroke="#fff" stroke-width=".8"/><circle cx="13" cy="13" r="3.500" fill="#1e2b33" stroke="#fff"/></svg>
    <svg class="tk5" viewBox="0 0 15 13"><path d="M1 4h2l3-3v11l-3-3H1z" fill="none" stroke="#fff"/><path d="M9.500 4.500l4 4M13.500 4.500l-4 4" stroke="#fff"/></svg>
    <span class="ying">英</span>
    <div class="clock"><span>15:52</span><span>2024/3/2</span></div>
    <span class="notify"><svg viewBox="0 0 16 15"><path d="M.5.5h15v10.500H10l-2 3-2-3H.5z" fill="none" stroke="#fff"/></svg></span>
  </div>
</div>
</body>
</html>
```

FILE: styles.css
```css
* { box-sizing: border-box; }
html, body { margin: 0; padding: 0; }
body {
  width: 1920px; height: 1080px; overflow: hidden;
  display: flex; flex-direction: column;
  font: 12px/1.2 "Liberation Sans", "Noto Sans CJK SC", sans-serif;
  color: #333; background: #fff;
}
.defs { display: none; }
.gt { font-family: "Liberation Sans", "Noto Sans CJK SC", sans-serif; }
.b { fill: #3f90f2; } .o { fill: #f6941e; } .w { fill: #fff; } .lb { fill: #b7d6fb; } .g { fill: #bdbdbd; }

/* header */
.top { height: 48px; background: linear-gradient(#fff, #f2f2f2); flex: none; }
.titlebar { height: 26px; display: flex; align-items: center; padding-left: 8px; position: relative; }
.logo { width: 23px; height: 17px; margin-right: 19px; }
.qa { flex: none; }
.qa-save { width: 15px; height: 13px; margin-right: 8px; }
.qa-undo { width: 13px; height: 13px; margin-right: 5px; }
.qa-redo { width: 12px; height: 13px; margin: 0 5px 0 10px; }
.qa-cut { width: 13px; height: 13px; margin: 0 10px 0 8px; }
.qa-copy { width: 13px; height: 14px; margin-right: 10px; }
.qa-paste { width: 14px; height: 14px; margin-right: 7px; }
.qa-more { width: 7px; height: 8px; }
.apptitle { position: absolute; left: 844px; top: 7px; color: #333; white-space: nowrap; word-spacing: 1.200px; }
.progress { position: absolute; left: 840px; top: 0; width: 241px; height: 1px; background: linear-gradient(90deg, #2f6fb5 48px, #ddd 48px); }
.winctl { position: absolute; right: 14px; top: 6px; display: flex; gap: 26px; }
.wc { width: 10px; height: 10px; }
.caret { display: inline-block; width: 0; height: 0; border: 3px solid transparent; border-top: 4px solid #666; border-bottom: 0; }
.caret-dark { border-top-color: #333; }
.caret-s { margin-left: 2px; vertical-align: middle; border-top-color: #555; }
.caret-g { border-top-color: #999; margin-left: 4px; }
.caret-m { margin: 0 0 0 2px; }

.menubar { height: 22px; display: flex; align-items: flex-end; padding-left: 9px; }
.mi { height: 20px; line-height: 21px; margin-right: 26px; font-size: 12px; white-space: nowrap; flex: none; }
.mi-file { margin-right: 9px; }
.mi-on { width: 50px; background: #3f90f2; color: #fff; text-align: center; border-radius: 3px 3px 0 0; margin-right: 13px; }
.menuright { margin-left: auto; display: flex; align-items: center; height: 22px; padding: 0 7px 0 0; }
.search { width: 279px; height: 18px; background: #fff; border: 1px solid #ddd; border-radius: 3px; display: flex; align-items: center; color: #8a8a8a; padding-left: 4px; margin-right: 31px; }
.s-ic { width: 12px; height: 12px; margin-right: 3px; }
.pill { width: 52px; height: 19px; line-height: 19px; border-radius: 10px; background: #3f90f2; color: #fff; text-align: center; margin-right: 8px; }
.mr-ic { flex: none; }
.head { width: 16px; height: 16px; margin-right: 7px; }
.gridi { width: 13px; height: 14px; }
.info { width: 14px; height: 14px; margin-left: 8px; }
.upc { width: 15px; height: 15px; margin: 0 1px 0 10px; }
.upd { color: #111; white-space: nowrap; }
.chev { width: 11px; height: 7px; margin-left: 13px; }

/* ribbon */
.ribbon {
  height: 73px; flex: none; display: flex; align-items: flex-start;
  padding: 7px 0 0 14px;
  background: linear-gradient(#f6f6f6, #dedede);
  border-top: 1px solid #cfcfcf; border-bottom: 1px solid #cfcfcf;
}
.rb { display: flex; flex-direction: column; align-items: center; flex: none; line-height: 17px; color: #333; white-space: nowrap; }
.off { color: #999; }
.ic { width: 24px; height: 24px; margin-bottom: 3px; display: block; }
.l2 { height: 17px; margin-top: -1px; display: flex; align-items: center; justify-content: center; gap: 4px; }
.g4 { margin-left: 4px; } .g5 { margin-left: 5px; } .g6 { margin-left: 6px; } .g7 { margin-left: 7px; }
.g9 { margin-left: 9px; } .g10 { margin-left: 10px; } .g11 { margin-left: 11px; } .g12 { margin-left: 12px; }
.g15 { margin-left: 15px; } .g17 { margin-left: 17px; } .g19 { margin-left: 19px; } .g20 { margin-left: 20px; }
.g21 { margin-left: 21px; } .g24 { margin-left: 24px; } .g28 { margin-left: 28px; }

/* tabs */
.tabbar { height: 26px; flex: none; display: flex; background: #f5f5f5; }
.tab { width: 80px; border-right: 1px solid #ddd; text-align: center; line-height: 31px; flex: none; }
.tab-w { width: 91px; }
.tab-on { background: #c7e3fb; color: #4a9cf0; }
.tb-tools { margin-left: auto; display: flex; align-items: center; padding: 2px 20px 0 0; }
.tt { width: 14px; height: 16px; margin-right: 10px; flex: none; }
.tt-sort { height: 14px; margin-right: 13px; }
.tt-set { margin-left: 10px; margin-right: 0; }
.strip { height: 2px; flex: none; background: #e3e3e3; }

/* main */
.main { height: 859px; flex: none; display: flex; }
.side { width: 264px; flex: none; background: #f5f5f5; border-right: 1px solid #ddd; }
.side-head { height: 29px; display: flex; justify-content: flex-end; align-items: flex-start; padding: 8px 13px 0 0; }
.collapse { width: 15px; height: 15px; border: 1px solid #ccc; border-radius: 2px; background: #e8e8e8; display: block; }
.col-ic { width: 13px; height: 13px; display: block; }
.side-tabs { width: 261px; height: 27px; background: #fff; border-bottom: 1px solid #ddd; display: flex; }
.st { width: 79px; line-height: 30px; text-align: center; border-right: 1px solid #ddd; background: #f5f5f5; flex: none; }
.st-on { background: #c7e3fb; color: #4a9cf0; }
.tree { padding-top: 1px; }
.tr-root { height: 24px; display: flex; align-items: center; padding: 2px 0 0 5px; color: #111; }
.tbox { width: 9px; height: 9px; border: 1px solid #99a; position: relative; margin-right: 10px; background: #fff; flex: none; }
.tbox::after { content: ""; position: absolute; left: 1px; right: 1px; top: 3px; height: 1px; background: #556; }
.tr-ic { width: 14px; height: 15px; margin-right: 4px; }
.tr-kid { height: 24px; display: flex; align-items: center; padding-left: 44px; position: relative; }
.tr-kid::before { content: ""; position: absolute; left: 27px; top: 0; bottom: 0; width: 1px; background: #f6cf9a; }
.tr-kid::after { content: ""; position: absolute; left: 27px; top: 12px; width: 13px; height: 1px; background: #f6cf9a; }
.kid-last::before { bottom: 12px; }
.doc { width: 10px; height: 13px; margin-right: 6px; flex: none; }
.kid-on { color: #4a9cf0; padding-top: 2px; }

.work { flex: 1; display: flex; flex-direction: column; background: #fff; min-width: 0; }
.gridpane { height: 516px; flex: none; padding: 1px 0 0 1px; border-bottom: 2px solid #cfcfcf; }

/* table */
.grid { border-collapse: collapse; table-layout: fixed; width: 1525px; border: 1px solid #b9bec6; }
.c20 { width: 20px; } .c126 { width: 126px; } .c41 { width: 41px; } .c221 { width: 221px; } .c161 { width: 161px; }
.c46 { width: 46px; } .c71 { width: 71px; } .c86 { width: 86px; } .c81 { width: 81px; } .c73 { width: 73px; }
.c96 { width: 96px; } .c103 { width: 103px; }
.grid th, .grid td { border: 1px solid #b9bec6; padding: 0; overflow: hidden; white-space: nowrap; font-weight: 400; height: 23px; }
.grid th { background: #e9e9e9; text-align: center; border-color: #c8c8c8; }
.grid th.th-on { background: #fde3bf; font-weight: 700; box-shadow: inset 0 -2px #1d6fe0; }
.m { font-family: "Liberation Mono", monospace; letter-spacing: -1.200px; }
.d { font-family: "Liberation Serif", serif; letter-spacing: .5px; }
.le { font-family: "Noto Sans CJK SC", sans-serif; display: inline-block; width: 12px; text-align: center; transform: scaleX(1.400); }
.rh { text-align: center; background: #fff; }
.num { text-align: right; padding-right: 3px !important; }
.ctr { text-align: center; }
.name { word-spacing: 3.500px; }
.name, .tx { padding-left: 2px !important; }
.ex { padding-left: 4px !important; }
.ex-q { padding-left: 2px !important; }

.r-b td { height: 23px; background: #c0c0c0; }
.r-b .rh { background: #f2f2f2; }
.r-b .name, .r-b .tx { font-size: 13px; }
.r-b .num { padding-top: 1px !important; }
.r-q td { background: #dce9fc; }
.r-q .rh { background: #fff; }
.r-d td { background: #fff; }

.code { position: relative; }
.code::before { content: ""; position: absolute; left: 9px; top: 0; bottom: 0; width: 1px; background: #f6cf9a; }
.r-last .code::before { display: none; }
.r-lastq .code::before { bottom: 11px; }
.r-b .code::before { top: 11px; }
.box { position: absolute; left: 13px; top: 5px; width: 12px; height: 12px; border: 1px solid #777; background: #fff; z-index: 1; }
.box::after { content: ""; position: absolute; left: 2px; right: 2px; top: 4px; height: 1px; background: #333; }
.box-b { left: 3px; top: 5px; }
.codet { position: absolute; left: 30px; top: 4px; font-family: "Liberation Serif", serif; }
.r-q .code::after, .r-s .code::after { content: ""; position: absolute; left: 9px; top: 11px; width: 4px; height: 1px; background: #f6cf9a; }
.kid { padding-left: 41px !important; }
.kid::after { content: ""; position: absolute; left: 18px; top: 0; width: 17px; height: 12px; border-left: 1px solid #f6cf9a; border-bottom: 1px solid #f6cf9a; }

.r-s td { background: #9fc6f8; box-shadow: inset 0 2px #0f6ae0, inset 0 -2px #0f6ae0; }
.r-s .rh-s { background: #fde3bf; box-shadow: none; }
.r-s .code-s { background: #dce9fc; box-shadow: inset 0 0 0 2px #0f6ae0; }
.r-s .end-s { box-shadow: inset 0 2px #0f6ae0, inset 0 -2px #0f6ae0, inset -2px 0 #0f6ae0; }

/* lower pane */
.lower { flex: 1; display: flex; flex-direction: column; min-height: 0; padding: 5px 0 0 8px; }
.ltabs { height: 24px; display: flex; gap: 2px; flex: none; }
.lt { background: #b8b8b8; text-align: center; line-height: 25px; border-radius: 2px 2px 0 0; flex: none; color: #333; }
.t78 { width: 78px; } .t90 { width: 90px; } .t114 { width: 114px; }
.lt-on { background: #4a9cf5; color: #fff; }
.notes { flex: 1; display: flex; gap: 10px; padding: 6px 10px 21px 2px; min-height: 0; }
.note { width: 813px; display: flex; flex-direction: column; flex: none; }
.nlabel { height: 20px; line-height: 17px; }
.nbox { flex: 1; border: 1px solid #c0c0c0; padding: 2px 0 0 5px; line-height: 14.200px; white-space: nowrap; font-family: "Noto Sans CJK SC", sans-serif; letter-spacing: -.04px; }

/* status */
.status { height: 32px; flex: none; background: #f5f5f5; border-top: 1px solid #ddd; display: flex; align-items: center; padding-left: 10px; white-space: nowrap; }
.sp { padding-right: 26px; margin-right: 17px; border-right: 1px solid #bbb; line-height: 20px; }
.sp-a { margin-right: 18px; }
.sp-b { padding-right: 22px; }
.sp-c { padding-right: 24px; }
.sright { margin-left: auto; display: flex; align-items: center; gap: 8px; padding-right: 6px; }
.vbtn { width: 21px; height: 22px; background: #fff; border: 1px solid #ddd; border-radius: 3px; display: flex; align-items: center; justify-content: center; margin-left: 8px; }
.vbtn2 { margin-left: 2px; }
.v-ic { width: 16px; height: 13px; }
.vsep { width: 1px; height: 22px; background: #ccc; margin-left: 3px; }
.v2 { width: 12px; height: 14px; margin-left: 3px; }
.zoom { margin-left: 11px; }
.zm { font-size: 16px; margin-left: 4px; line-height: 16px; }
.zp { font-size: 18px; margin-left: 3px; line-height: 16px; }
.slider { width: 106px; height: 1px; background: #bbb; position: relative; margin: 0 3px; }
.knob { position: absolute; left: 33px; top: -6px; width: 12px; height: 12px; border: 1px solid #666; border-radius: 50%; background: #fff; }

/* taskbar */
.taskbar { height: 40px; flex: none; background: linear-gradient(90deg, #1a2730, #1f3039); display: flex; align-items: center; position: relative; color: #fff; }
.tk { flex: none; }
.t-win { width: 17px; height: 16px; margin-left: 16px; }
.t-search { width: 17px; height: 17px; margin-left: 30px; }
.t-view { width: 17px; height: 17px; margin-left: 32px; }
.t-chrome { width: 25px; height: 25px; margin-left: 30px; }
.t-app { width: 24px; height: 24px; margin-left: 24px; }
.t-active { width: 47px; height: 40px; margin-left: 13px; background: #3b4951; display: flex; align-items: center; justify-content: center; border-bottom: 2px solid #76b9ed; flex: none; }
.t-yu { width: 24px; height: 24px; background: #3f8ff0; border-radius: 4px; color: #fff; font-size: 18px; line-height: 24px; text-align: center; }
.t-xl { width: 23px; height: 24px; margin-left: 15px; background: #1d6f42; border-radius: 2px; display: flex; align-items: center; padding-left: 2px; color: #fff; font-weight: 700; font-size: 12px; flex: none; position: relative; }
.xl-b { position: absolute; right: 2px; top: 5px; width: 7px; height: 14px; border: 1px solid #fff; }
.ind { position: absolute; bottom: 0; height: 2px; background: #76b9ed; }
.ind1 { left: 200px; width: 40px; }
.ind3 { left: 298px; width: 40px; }
.tray { margin-left: auto; display: flex; align-items: center; height: 40px; padding-right: 9px; }
.tk2 { width: 14px; height: 17px; margin-right: 9px; }
.tk3 { width: 16px; height: 16px; margin-right: 8px; }
.tk4 { width: 17px; height: 17px; margin-right: 7px; }
.tk5 { width: 15px; height: 13px; margin-right: 9px; }
.ying { font-size: 14px; margin-right: 10px; }
.clock { display: flex; flex-direction: column; align-items: center; font-size: 13px; line-height: 19px; width: 60px; }
.notify { width: 46px; margin-left: 6px; height: 40px; display: flex; align-items: center; justify-content: center; background: #22323b; }
.notify svg { width: 16px; height: 15px; }
```
